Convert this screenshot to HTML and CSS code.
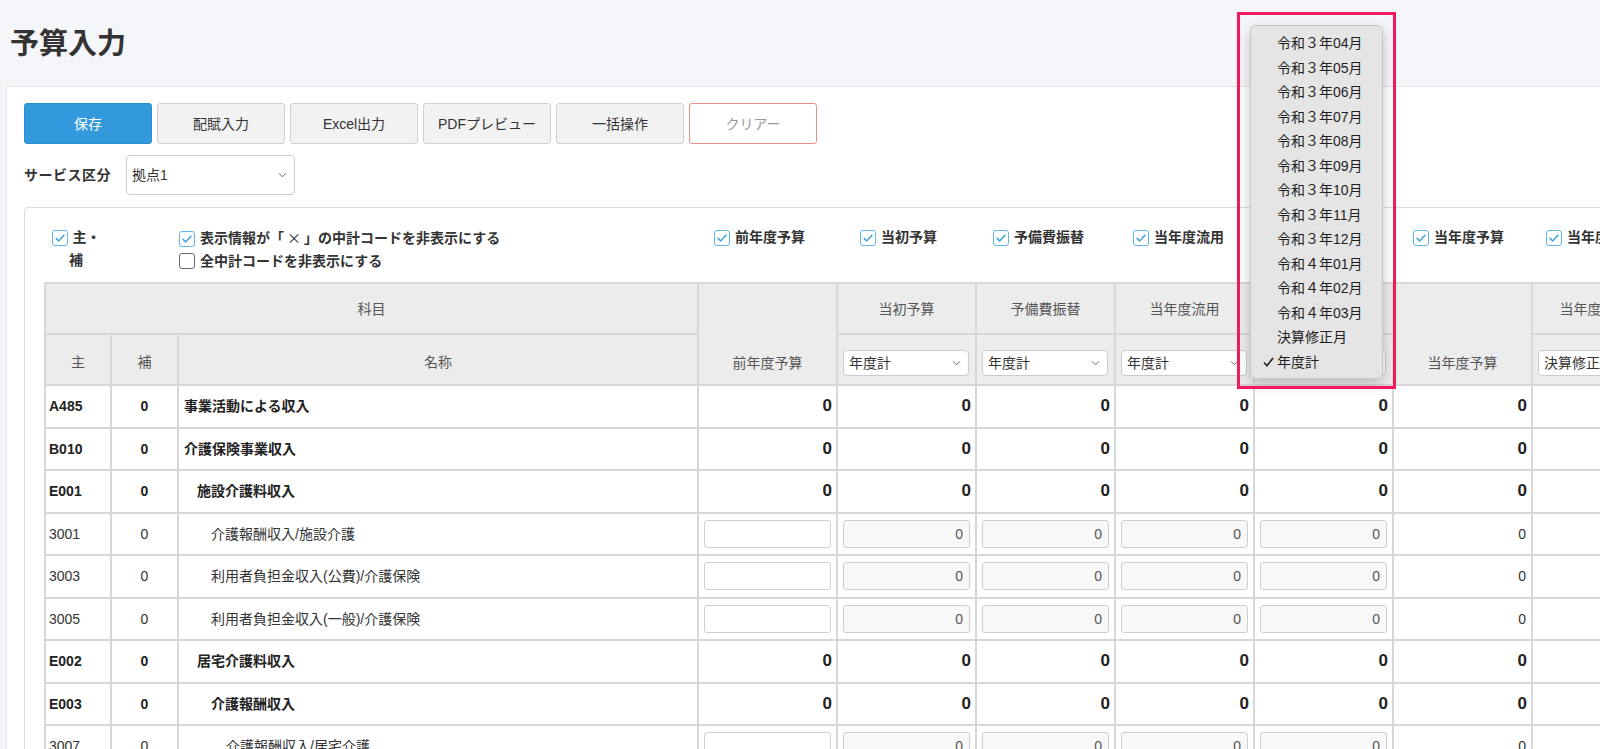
FILE: index.html
```html
<!DOCTYPE html>
<html lang="ja">
<head>
    <meta charset="UTF-8">
    <meta name="viewport" content="width=device-width, initial-scale=1.0">
    <title>予算入力</title>
    <link rel="stylesheet" href="styles.css">
</head>
<body>
    <h1 class="page-title">予算入力</h1>

    <div class="panel">
        <div class="toolbar">
            <button class="btn btn-primary">保存</button>
            <button class="btn">配賦入力</button>
            <button class="btn">Excel出力</button>
            <button class="btn">PDFプレビュー</button>
            <button class="btn">一括操作</button>
            <button class="btn btn-clear">クリアー</button>
        </div>

        <div class="service-row">
            <span class="service-label">サービス区分</span>
            <div class="select select-lg"><span>拠点1</span><i class="chev"></i></div>
        </div>

        <div class="card">
            <div class="options">
                <label class="opt opt-code"><span class="cb on"></span>主・補</label>
                <div class="opt-group">
                    <label class="opt"><span class="cb on"></span>表示情報が「<span class="x-mark">×</span>」の中計コードを非表示にする</label>
                    <label class="opt"><span class="cb"></span>全中計コードを非表示にする</label>
                </div>
                <label class="opt"><span class="cb on"></span>前年度予算</label>
                <label class="opt"><span class="cb on"></span>当初予算</label>
                <label class="opt"><span class="cb on"></span>予備費振替</label>
                <label class="opt"><span class="cb on"></span>当年度流用</label>
                <label class="opt"><span class="cb on"></span>補正予算</label>
                <label class="opt"><span class="cb on"></span>当年度予算</label>
                <label class="opt"><span class="cb on"></span>当年度実績額</label>
                <label class="opt"><span class="cb on"></span>差異</label>
            </div>

            <table class="budget">
                <colgroup>
                    <col class="c-code">
                    <col class="c-sub">
                    <col class="c-name">
                    <col class="c-num"><col class="c-num"><col class="c-num"><col class="c-num">
                    <col class="c-num"><col class="c-num"><col class="c-num"><col class="c-num">
                </colgroup>
                <thead>
                    <tr class="head-1">
                        <th colspan="3">科目</th>
                        <th rowspan="2" class="span2">前年度予算</th>
                        <th>当初予算</th>
                        <th>予備費振替</th>
                        <th>当年度流用</th>
                        <th>補正予算</th>
                        <th rowspan="2" class="span2">当年度予算</th>
                        <th>当年度実績額</th>
                        <th rowspan="2" class="span2">差異</th>
                    </tr>
                    <tr class="head-2">
                        <th>主</th>
                        <th>補</th>
                        <th>名称</th>
                        <th class="sel"><div class="select select-sm"><span>年度計</span><i class="chev"></i></div></th>
                        <th class="sel"><div class="select select-sm"><span>年度計</span><i class="chev"></i></div></th>
                        <th class="sel"><div class="select select-sm"><span>年度計</span><i class="chev"></i></div></th>
                        <th class="sel"><div class="select select-sm"><span>年度計</span><i class="chev"></i></div></th>
                        <th class="sel"><div class="select select-sm"><span>決算修正月</span><i class="chev"></i></div></th>
                    </tr>
                </thead>
                <tbody id="rows"></tbody>
            </table>
        </div>
    </div>

    <!-- open select (補正予算 column) -->
    <div class="select-menu" id="menu"></div>
    <div class="highlight"></div>

    <script>
        const CHECK = '<svg viewBox="0 0 16 16" width="14" height="14"><path d="M3.5 8.2 L6.6 11.3 L12.6 4.8" fill="none" stroke="#2f9be0" stroke-width="1.6" stroke-linecap="round" stroke-linejoin="round"/></svg>';
        const CHEV = '<svg viewBox="0 0 10 6" width="9" height="6"><path d="M1 1 L5 5 L9 1" fill="none" stroke="#666" stroke-width="1.1"/></svg>';

        document.querySelectorAll('.cb.on').forEach(el => el.innerHTML = CHECK);
        document.querySelectorAll('.chev').forEach(el => el.innerHTML = CHEV);

        // code, sub, name, level, total row?
        const rows = [
            ['A485', '0', '事業活動による収入', 0, true],
            ['B010', '0', '介護保険事業収入', 0, true],
            ['E001', '0', '施設介護料収入', 1, true],
            ['3001', '0', '介護報酬収入/施設介護', 2, false],
            ['3003', '0', '利用者負担金収入(公費)/介護保険', 2, false],
            ['3005', '0', '利用者負担金収入(一般)/介護保険', 2, false],
            ['E002', '0', '居宅介護料収入', 1, true],
            ['E003', '0', '介護報酬収入', 2, true],
            ['3007', '0', '介護報酬収入/居宅介護', 3, false],
            ['3009', '0', '介護予防報酬収入/居宅介護', 3, false]
        ];

        document.getElementById('rows').innerHTML = rows.map(([code, sub, name, lv, total]) => {
            let nums;
            if (total) {
                nums = '<td class="num">0</td>'.repeat(8);
            } else {
                nums = '<td class="num"><input class="cell-input" value=""></td>'
                    + '<td class="num"><input class="cell-input" readonly value="0"></td>'.repeat(4)
                    + '<td class="num">0</td>'.repeat(3);
            }
            return `
                <tr class="${total ? 'total' : ''}">
                    <td class="code">${code}</td>
                    <td class="sub">${sub}</td>
                    <td class="name lv${lv}">${name}</td>
                    ${nums}
                </tr>`;
        }).join('');

        const months = [
            '令和３年04月', '令和３年05月', '令和３年06月', '令和３年07月',
            '令和３年08月', '令和３年09月', '令和３年10月', '令和３年11月',
            '令和３年12月', '令和４年01月', '令和４年02月', '令和４年03月',
            '決算修正月', '年度計'
        ];
        const TICK = '<svg viewBox="0 0 12 11" width="11" height="10"><path d="M1 6 L4.3 9.6 L11 1" fill="none" stroke="#222" stroke-width="1.8"/></svg>';
        document.getElementById('menu').innerHTML = months.map(m =>
            `<div class="menu-item"><span class="menu-check">${m === '年度計' ? TICK : ''}</span>${m}</div>`
        ).join('');
    </script>
</body>
</html>
```

FILE: styles.css
```css
* {
    box-sizing: border-box;
}

html, body {
    overflow: hidden;
}

body {
    margin: 0;
    background: #f5f6f9;
    color: #333;
    font-family: "Liberation Sans", "Noto Sans CJK JP", sans-serif;
    font-size: 14px;
    line-height: 20px;
}

.page-title {
    margin: 0;
    padding: 30px 0 0 10px;
    font-size: 29px;
    line-height: 28px;
    font-weight: bold;
    color: #333;
}

.panel {
    width: max-content;
    margin: 28px 0 0 6px;
    padding: 16px 18px 40px 17px;
    background: #fff;
    border: 1px solid #e4e4e4;
}

.toolbar {
    display: flex;
    gap: 5px;
}

.btn {
    width: 128px;
    height: 41px;
    border: 1px solid #d0d0d0;
    border-radius: 3px;
    background: #f2f2f2;
    color: #333;
    font: inherit;
}

.btn-primary {
    background: #3399dd;
    border-color: #2b8fd3;
    color: #fff;
}

.btn-clear {
    background: #fff;
    border-color: #ee8c88;
    color: #999;
}

.service-row {
    display: flex;
    align-items: center;
    gap: 12px;
    margin-top: 11px;
}

.service-label {
    font-weight: bold;
    letter-spacing: 0.5px;
    padding-right: 3px;
}

.select {
    display: flex;
    align-items: center;
    justify-content: space-between;
    background: #fff;
    border: 1px solid #ccc;
    border-radius: 4px;
    padding: 0 7px 0 5px;
    color: #333;
    text-align: left;
}

.select-lg {
    width: 169px;
    height: 40px;
}

.select-sm {
    height: 26px;
}

.chev {
    display: flex;
    align-items: center;
}

.card {
    margin-top: 12px;
    padding: 18px 18px 30px 19px;
    border: 1px solid #dcdcdc;
    border-radius: 4px;
}

.options {
    display: grid;
    grid-template-columns: 60px 608px 146px 133px 140px 139px 141px 133px 140px 140px;
    margin-left: 2px;
    line-height: 23px;
    font-weight: bold;
    color: #333;
}

.opt {
    display: block;
}

.opt-code {
    text-align: center;
}

.opt-group {
    padding-left: 73px;
}

.x-mark {
    font-family: "Noto Sans CJK JP", sans-serif;
    font-weight: normal;
    font-feature-settings: "fwid" 1;
    padding: 0 3px;
}

.cb {
    display: inline-flex;
    align-items: center;
    justify-content: center;
    width: 16px;
    height: 16px;
    margin-right: 5px;
    vertical-align: -3px;
    background: #fff;
    border: 1px solid #63b6e9;
    border-radius: 3px;
}

.cb:not(.on) {
    border-color: #6a6a6a;
}

.budget {
    margin-top: 9px;
    border-collapse: collapse;
    table-layout: fixed;
    width: 1765px;
}

.c-code { width: 66px; }
.c-sub { width: 67px; }
.c-name { width: 520px; }
.c-num { width: 139px; }

.budget th,
.budget td {
    border: 2px solid #d7d7d7;
}

.budget th {
    height: 51px;
    padding: 0 6px;
    background: #ececec;
    color: #555;
    font-weight: normal;
}

.head-2 th {
    vertical-align: bottom;
    padding-bottom: 12px;
}

.head-2 th.sel {
    padding: 0 6px 8px 5px;
}

.budget th.span2 {
    vertical-align: bottom;
    padding-bottom: 11px;
}

.budget td {
    height: 42.5px;
    padding: 0 6px;
    background: #fff;
    color: #333;
}

.budget td.code {
    padding-left: 3px;
}

.budget td.sub {
    text-align: center;
}

.budget td.lv0 { padding-left: 5px; }
.budget td.lv1 { padding-left: 18px; }
.budget td.lv2 { padding-left: 32px; }
.budget td.lv3 { padding-left: 47px; }

.budget td.num {
    text-align: right;
    padding: 0 5px 0 5px;
}

.budget .total td {
    font-weight: bold;
    color: #222;
}

.budget .total td.num {
    font-size: 17px;
    padding-right: 4px;
}

.cell-input {
    display: block;
    width: 100%;
    height: 28px;
    padding: 0 6px;
    border: 1px solid #cfcfcf;
    border-radius: 3px;
    background: #fff;
    color: #555;
    font: inherit;
    text-align: right;
}

.cell-input[readonly] {
    background: #f8f8f8;
}

.select-menu {
    position: absolute;
    left: 1250px;
    top: 25px;
    width: 133px;
    padding: 5px 0 4px;
    background: rgba(228, 228, 228, 0.98);
    border: 1px solid #c6c6c6;
    border-radius: 6px;
    box-shadow: 0 5px 14px rgba(0, 0, 0, 0.22);
    color: #1e1e1e;
    font-size: 14px;
}

.menu-item {
    display: flex;
    align-items: center;
    height: 24.5px;
    padding-left: 12px;
}

.menu-check {
    display: flex;
    align-items: center;
    width: 14px;
}

.highlight {
    position: absolute;
    left: 1237px;
    top: 12px;
    width: 159px;
    height: 377px;
    border: 3px solid #f31a5c;
}
```
